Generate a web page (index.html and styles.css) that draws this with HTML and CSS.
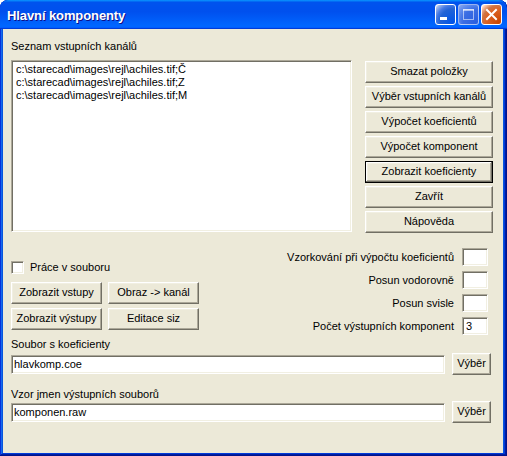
FILE: index.html
```html
<!DOCTYPE html>
<html lang="cs">
<head>
<meta charset="utf-8">
<title>Hlavní komponenty</title>
<link rel="stylesheet" href="styles.css">
</head>
<body>
<div class="window">
  <div class="titlebar">
    <span class="title">Hlavní komponenty</span>
    <div class="tb-buttons">
      <span class="tb-btn tb-min"><svg width="19" height="19" viewBox="0 0 19 19"><rect x="4" y="12" width="7" height="3" fill="#fff"/></svg></span>
      <span class="tb-btn tb-max"><svg width="19" height="19" viewBox="0 0 19 19"><rect x="4.5" y="4.5" width="10" height="10" fill="none" stroke="#fff" stroke-opacity="0.55"/><rect x="4" y="4" width="11" height="2" fill="#fff" fill-opacity="0.55"/></svg></span>
      <span class="tb-btn tb-close"><svg width="19" height="19" viewBox="0 0 19 19"><path d="M5 5 L14 14 M14 5 L5 14" stroke="#fff" stroke-width="2" stroke-linecap="square"/></svg></span>
    </div>
  </div>
  <div class="client">
    <div class="label">Seznam vstupních kanálů</div>
    <div class="top-row">
      <div class="listbox sunken">
        <div class="item">c:\starecad\images\rejl\achiles.tif;Č</div>
        <div class="item">c:\starecad\images\rejl\achiles.tif;Z</div>
        <div class="item">c:\starecad\images\rejl\achiles.tif;M</div>
      </div>
      <div class="btn-col">
        <div class="btn" role="button">Smazat položky</div>
        <div class="btn" role="button">Výběr vstupních kanálů</div>
        <div class="btn" role="button">Výpočet koeficientů</div>
        <div class="btn" role="button">Výpočet komponent</div>
        <div class="btn default" role="button">Zobrazit koeficienty</div>
        <div class="btn" role="button">Zavřít</div>
        <div class="btn" role="button">Nápověda</div>
      </div>
    </div>
    <div class="mid-row">
      <div class="mid-left">
        <label class="check"><span class="checkbox sunken"></span>Práce v souboru</label>
        <div class="btn-grid">
          <div class="btn" role="button">Zobrazit vstupy</div>
          <div class="btn" role="button">Obraz -&gt; kanál</div>
          <div class="btn" role="button">Zobrazit výstupy</div>
          <div class="btn" role="button">Editace siz</div>
        </div>
      </div>
      <div class="mid-right">
        <div class="param"><span>Vzorkování při výpočtu koeficientů</span><span class="num sunken"></span></div>
        <div class="param"><span>Posun vodorovně</span><span class="num sunken"></span></div>
        <div class="param"><span>Posun svisle</span><span class="num sunken"></span></div>
        <div class="param"><span>Počet výstupních komponent</span><span class="num sunken">3</span></div>
      </div>
    </div>
    <div class="file-block">
      <div class="label">Soubor s koeficienty</div>
      <div class="file-row">
        <span class="text sunken">hlavkomp.coe</span>
        <div class="btn small" role="button">Výběr</div>
      </div>
    </div>
    <div class="file-block second">
      <div class="label">Vzor jmen výstupních souborů</div>
      <div class="file-row">
        <span class="text sunken">komponen.raw</span>
        <div class="btn small" role="button">Výběr</div>
      </div>
    </div>
  </div>
</div>
</body>
</html>
```

FILE: styles.css
```css
html, body {
  margin: 0;
  padding: 0;
  background: #ffffff;
}

.window {
  width: 507px;
  height: 456px;
  box-sizing: border-box;
  display: flex;
  flex-direction: column;
  background: #0855dd;
  border-radius: 8px 8px 0 0;
  box-shadow: inset -1px -1px #00138c, inset 1px 1px #0831d9, inset -2px -2px #001ea0, inset 2px 2px #166aee, inset -3px -3px #003bda, inset 3px 3px #0855dd;
  font-family: "Liberation Sans", Arial, sans-serif;
  font-size: 11px;
  font-weight: 400;
  color: #000;
  overflow: hidden;
}

.titlebar {
  height: 29px;
  flex: none;
  display: flex;
  align-items: center;
  justify-content: space-between;
  padding: 0 5px 0 7px;
  border-radius: 8px 8px 0 0;
  background: linear-gradient(180deg, #0997ff, #0053ee 8%, #0050ee 40%, #0066ff 88%, #0066ff 93%, #005bff 95%, #003dd7 96%, #003dd7);
}

.title {
  color: #fff;
  font-family: "Liberation Sans", Arial, sans-serif;
  font-weight: bold;
  font-size: 13px;
  letter-spacing: -0.1px;
  text-shadow: 1px 1px #0f1089;
  padding-top: 1px;
}

.tb-buttons {
  display: flex;
  gap: 2px;
}

.tb-btn {
  width: 21px;
  height: 21px;
  box-sizing: border-box;
  border: 1px solid #fff;
  border-radius: 3px;
  display: flex;
  align-items: center;
  justify-content: center;
}

.tb-min {
  background: radial-gradient(circle at 90% 90%, #0054e9 0, #2263d5 55%, #4479e4 70%, #a3bbec 90%, #fff 100%);
}

.tb-max {
  border-color: rgba(255, 255, 255, 0.5);
  background: radial-gradient(circle at 90% 90%, #2a5fe0 0, #3c6ee3 55%, #5583ea 70%, #8aa8ee 100%);
}

.tb-close {
  background: radial-gradient(circle at 90% 90%, #cc4600 0, #dc6527 55%, #cd7546 70%, #ffccb2 90%, #fff 100%);
}

.client {
  flex: 1;
  margin: 0 4px 3px 3px;
  background: #ece9d8;
  padding: 11px 10px 0 8px;
  box-sizing: border-box;
}

.label {
  line-height: 13px;
  height: 13px;
  white-space: nowrap;
}

.top-row {
  display: flex;
  margin-top: 7px;
}

.sunken {
  box-sizing: border-box;
  background: #fff;
  border: 1px solid;
  border-color: #aca899 #fff #fff #aca899;
  box-shadow: inset 1px 1px #716f64, inset -1px -1px #f1efe2;
}

.listbox {
  width: 341px;
  height: 172px;
  padding: 2px 2px 2px 4px;
}

.item {
  line-height: 13px;
  white-space: nowrap;
}

.btn-col {
  margin-left: 13px;
  margin-top: 1px;
  width: 128px;
  display: flex;
  flex-direction: column;
  gap: 3px;
}

.btn {
  box-sizing: border-box;
  height: 22px;
  background: #ece9d8;
  border: 1px solid;
  border-color: #fff #716f64 #716f64 #fff;
  box-shadow: inset -1px -1px #aca899, inset 1px 1px #f1efe2;
  font-weight: 400;
  text-align: center;
  line-height: 19px;
  white-space: nowrap;
}

.btn.default {
  border-color: #000;
  box-shadow: inset -1px -1px #716f64, inset 1px 1px #fff, inset -2px -2px #aca899, inset 2px 2px #f1efe2;
}

.mid-row {
  display: flex;
  justify-content: space-between;
}

.mid-left {
  padding-top: 28px;
  width: 188px;
}

.check {
  display: flex;
  align-items: center;
  gap: 6px;
  height: 13px;
  line-height: 13px;
}

.checkbox {
  width: 13px;
  height: 13px;
  flex: none;
}

.btn-grid {
  margin-top: 8px;
  display: grid;
  grid-template-columns: 91px 91px;
  column-gap: 6px;
  row-gap: 4px;
}

.mid-right {
  padding-top: 15px;
  margin-right: 5px;
  display: flex;
  flex-direction: column;
  align-items: flex-end;
  gap: 5px;
}

.param {
  display: flex;
  align-items: center;
  gap: 8px;
  height: 18px;
  white-space: nowrap;
}

.num {
  width: 26px;
  height: 18px;
  line-height: 16px;
  padding-left: 3px;
}

.file-block {
  margin-top: 3px;
}

.file-block.second {
  margin-top: 13px;
}

.file-row {
  display: flex;
  align-items: center;
  gap: 7px;
  margin-top: 2px;
}

.file-block.second .file-row {
  margin-top: 0;
}

.text {
  width: 434px;
  height: 19px;
  line-height: 17px;
  padding-left: 2px;
  white-space: nowrap;
}

.btn.small {
  width: 39px;
}
```
